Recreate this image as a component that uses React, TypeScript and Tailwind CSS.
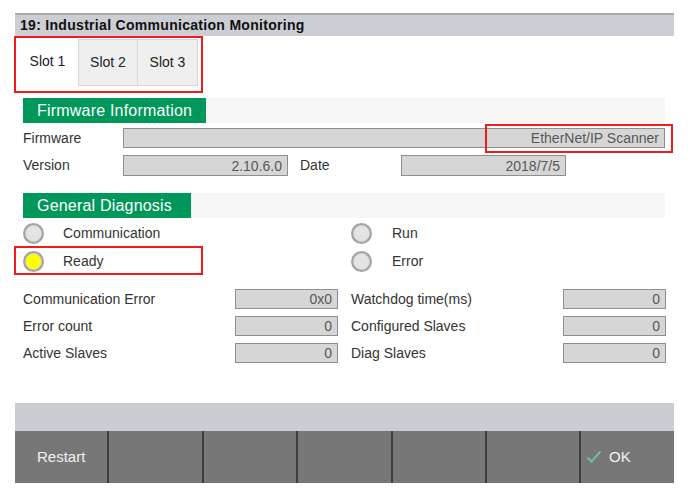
import React from "react";

const font = { fontFamily: '"Liberation Sans", Arial, sans-serif' };

function Field({ value, className }: { value: string; className: string }) {
  return (
    <div
      className={`h-[20px] bg-[#d6d6d6] border border-[#8e8e8e] flex items-center justify-end pr-[5px] text-[14px] text-[#585858] leading-none ${className}`}
    >
      {value}
    </div>
  );
}

function Led({ on }: { on?: boolean }) {
  return (
    <div className="w-[21px] h-[21px] rounded-full bg-[#a3a3a3] p-[2px] shrink-0">
      <div
        className={`w-full h-full rounded-full border border-[#cfcfcf] ${
          on ? "bg-[#ffff00]" : "bg-[#e4e4e4]"
        }`}
      />
    </div>
  );
}

function SectionHeader({ title, width }: { title: string; width: string }) {
  return (
    <div className="ml-[8px] w-[642px] h-[25px] bg-[#f6f6f6] flex">
      <div
        className={`${width} h-full bg-[#00975a] text-white text-[16px] flex items-center pl-[14px] tracking-[0.2px]`}
      >
        {title}
      </div>
    </div>
  );
}

function DataRow({
  l1,
  v1,
  l2,
  v2,
}: {
  l1: string;
  v1: string;
  l2: string;
  v2: string;
}) {
  return (
    <div className="flex items-center h-[20px] ml-[8px]">
      <div className="w-[212px] text-[14px] text-[#333]">{l1}</div>
      <Field value={v1} className="w-[103px]" />
      <div className="w-[13px]" />
      <div className="w-[212px] text-[14px] text-[#333]">{l2}</div>
      <Field value={v2} className="w-[103px]" />
    </div>
  );
}

export default function App() {
  return (
    <div className="w-[692px] h-[499px] bg-white" style={font}>
      <div className="pl-[15px] pt-[13px] w-[674px] flex flex-col">
        {/* Title bar */}
        <div className="h-[23px] border-t-2 border-[#a8abae] bg-[#cbced2] flex items-center pl-[5px] text-[14px] font-bold text-[#111] tracking-[0.3px]">
          19: Industrial Communication Monitoring
        </div>

        {/* Tabs */}
        <div className="-ml-px w-[189px] h-[57px] border-2 border-[#ee1c1c] pt-px pl-px flex items-start">
          <div className="w-[61px] h-[47px] bg-white flex items-center justify-center text-[14px] text-[#222] pb-[2px]">
            Slot 1
          </div>
          <div className="w-[60px] h-[47px] bg-[#efefef] border border-[#d8d8d8] flex items-center justify-center text-[14px] text-[#222]">
            Slot 2
          </div>
          <div className="w-[60px] h-[47px] bg-[#efefef] border border-l-0 border-[#d8d8d8] flex items-center justify-center text-[14px] text-[#222]">
            Slot 3
          </div>
        </div>

        {/* Firmware information */}
        <div className="mt-[5px]">
          <SectionHeader title="Firmware Information" width="w-[183px]" />
        </div>
        <div className="relative mt-[5px] flex items-center h-[20px] ml-[8px]">
          <div className="w-[100px] text-[14px] text-[#333]">Firmware</div>
          <Field value="EtherNet/IP Scanner" className="w-[542px]" />
          <div className="absolute left-[462px] top-[-4px] w-[188px] h-[29px] border-2 border-[#ee1c1c]" />
        </div>
        <div className="mt-[7px] flex items-center h-[21px] ml-[8px]">
          <div className="w-[100px] text-[14px] text-[#333]">Version</div>
          <Field value="2.10.6.0" className="w-[165px] h-[21px]" />
          <div className="w-[113px] pl-[12px] text-[14px] text-[#333]">Date</div>
          <Field value="2018/7/5" className="w-[165px] h-[21px]" />
        </div>

        {/* General diagnosis */}
        <div className="mt-[17px]">
          <SectionHeader title="General Diagnosis" width="w-[168px]" />
        </div>
        <div className="ml-[8px] mt-[4px] grid grid-cols-[328px_1fr] gap-y-[6px]">
          <div className="flex items-center h-[22px]">
            <Led />
            <span className="ml-[19px] text-[14px] text-[#333]">Communication</span>
          </div>
          <div className="flex items-center h-[22px]">
            <Led />
            <span className="ml-[20px] text-[14px] text-[#333]">Run</span>
          </div>
          <div className="relative flex items-center h-[22px]">
            <Led on />
            <span className="ml-[19px] text-[14px] text-[#333]">Ready</span>
            <div className="absolute left-[-9px] top-[-4px] w-[189px] h-[29px] border-2 border-[#ee1c1c]" />
          </div>
          <div className="flex items-center h-[22px]">
            <Led />
            <span className="ml-[20px] text-[14px] text-[#333]">Error</span>
          </div>
        </div>

        <div className="mt-[17px] flex flex-col gap-[7px]">
          <DataRow l1="Communication Error" v1="0x0" l2="Watchdog time(ms)" v2="0" />
          <DataRow l1="Error count" v1="0" l2="Configured Slaves" v2="0" />
          <DataRow l1="Active Slaves" v1="0" l2="Diag Slaves" v2="0" />
        </div>

        {/* Bottom bars */}
        <div className="mt-[40px] h-[28px] bg-[#cacdd1]" />
        <div className="h-[52px] bg-[#777777] grid grid-cols-[92px_95px_94px_95px_94px_94px_95px]">
          <div className="flex items-center pl-[22px] text-[15px] text-[#f2f2f2]">Restart</div>
          <div className="border-l-2 border-[#3d3d3d]" />
          <div className="border-l-2 border-[#3d3d3d]" />
          <div className="border-l-2 border-[#3d3d3d]" />
          <div className="border-l-2 border-[#3d3d3d]" />
          <div className="border-l-2 border-[#3d3d3d]" />
          <div className="border-l-2 border-[#3d3d3d] flex items-center pl-[5px] text-[15px] text-[#f2f2f2]">
            <svg width="16" height="14" viewBox="0 0 16 14" className="mr-[7px]">
              <path d="M1.5 7.5 L5.5 11.5 L14.5 1.5" fill="none" stroke="#6cc0a0" strokeWidth="2" />
            </svg>
            OK
          </div>
        </div>
      </div>
    </div>
  );
}
